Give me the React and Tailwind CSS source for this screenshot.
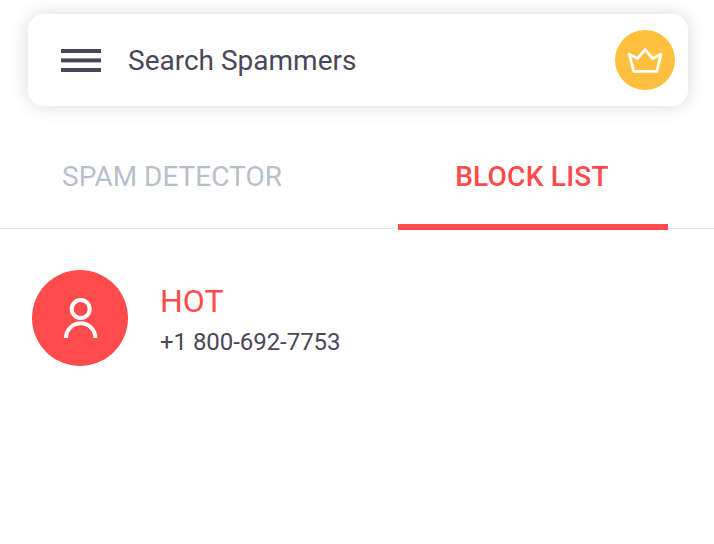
import React from 'react';

const contacts = [{ name: 'HOT', phone: '+1 800-692-7753' }];

const MenuIcon = () => (
    <svg width="40" height="23" viewBox="0 0 40 23" fill="#4b475a">
        <rect width="40" height="4" />
        <rect y="9.4" width="40" height="4" />
        <rect y="19" width="40" height="4" />
    </svg>
);

const CrownIcon = () => (
    <svg width="60" height="60" viewBox="0 0 60 60" fill="none" stroke="#fff" strokeWidth="2.8" strokeLinejoin="round">
        <path d="M14.2 24.2 L22.5 28.5 L30.1 19.6 L37.7 28.5 L46.1 24.2 L41.8 41.4 H18.8 Z" />
    </svg>
);

const PersonIcon = () => (
    <svg width="96" height="96" viewBox="0 0 96 96" fill="none" stroke="#fff" strokeWidth="4">
        <circle cx="48.7" cy="39" r="9" />
        <path d="M34 68 A14.7 14.7 0 0 1 63.4 68" />
    </svg>
);

const SearchBar = () => (
    <div className="ml-7 mt-3.5 w-[660px] h-[92px] pl-[33px] pr-[13px] flex items-center bg-white rounded-2xl shadow-[0_0_20px_rgba(0,0,0,0.15)]">
        <MenuIcon />
        <span className="ml-[27px] flex-1 pt-0.5 text-[28px] leading-8 text-[#4b475a]">Search Spammers</span>
        <button className="size-[60px] rounded-full bg-[#ffc13d]">
            <CrownIcon />
        </button>
    </div>
);

const Tabs = () => (
    <div className="mt-[34px] h-[90px] flex items-start bg-[linear-gradient(#e4e9f0,#e4e9f0)] bg-no-repeat bg-[length:100%_1px] bg-[position:0_88px]">
        <button className="ml-[62px] mt-[21px] w-[336px] text-left text-[28px] leading-8 text-[#b8bfcb]">SPAM DETECTOR</button>
        <button className="w-[270px] h-[90px] pt-[21px] flex items-start justify-center border-b-6 border-[#ff4b4b] text-[28px] leading-8 font-medium tracking-[0.25px] text-[#ff4b4b]">
            <span className="-ml-0.5">BLOCK LIST</span>
        </button>
    </div>
);

const ContactRow = ({ contact }) => (
    <div className="mt-10 ml-8 flex">
        <div className="size-24 rounded-full bg-[#ff4b4b]">
            <PersonIcon />
        </div>
        <div className="ml-8 pt-3">
            <p className="text-[32px] leading-[38px] text-[#ff4b4b]">{contact.name}</p>
            <p className="mt-2 text-2xl leading-7 tracking-[-0.05px] text-[#4b475a]">{contact.phone}</p>
        </div>
    </div>
);

const App = () => {
    return (
        <div className="h-[544px] flow-root overflow-hidden bg-white font-['Roboto',sans-serif]">
            <SearchBar />
            <Tabs />
            {contacts.map((contact) => (
                <ContactRow key={contact.phone} contact={contact} />
            ))}
        </div>
    );
};

export default App;
